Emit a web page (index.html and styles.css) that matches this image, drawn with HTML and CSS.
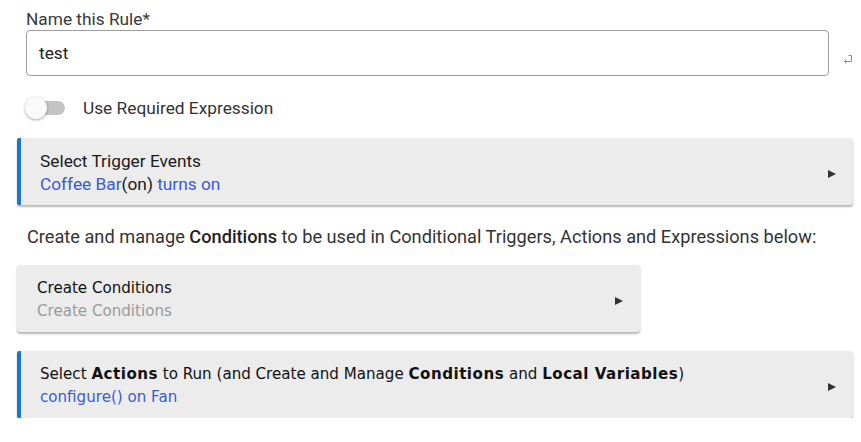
FILE: index.html
```html
<!DOCTYPE html>
<html>
<head>
<meta charset="utf-8">
<link rel="stylesheet" href="styles.css">
</head>
<body>
<div class="page">
  <div class="field">
    <label class="field-label">Name this Rule*</label>
    <div class="input-row">
      <div class="input">test</div>
      <svg class="enter-icon" width="11" height="11" viewBox="0 0 11 11">
        <path d="M6.5 1.5 H9.5 V7.5 H2.5 M4.5 5.5 L2.5 7.5 L4.5 9.5" fill="none" stroke="#8a8a8a" stroke-width="1"/>
      </svg>
    </div>
  </div>
  <div class="toggle-row">
    <span class="toggle"><span class="track"></span><span class="knob"></span></span>
    <span class="toggle-label">Use Required Expression</span>
  </div>
  <div class="card accent roboto first">
    <div class="card-text">
      <div class="card-title">Select Trigger Events</div>
      <div class="card-sub link">Coffee Bar<span class="plain">(on)</span> turns on</div>
    </div>
    <span class="arrow"></span>
  </div>
  <p class="note">Create and manage <b>Conditions</b> to be used in Conditional Triggers, Actions and Expressions below:</p>
  <div class="card narrow tahoma">
    <div class="card-text">
      <div class="card-title">Create Conditions</div>
      <div class="card-sub muted">Create Conditions</div>
    </div>
    <span class="arrow"></span>
  </div>
  <div class="card accent tahoma last">
    <div class="card-text">
      <div class="card-title">Select <b>Actions</b> to Run (and Create and Manage <b>Conditions</b> and <b>Local Variables</b>)</div>
      <div class="card-sub link">configure() on Fan</div>
    </div>
    <span class="arrow"></span>
  </div>
</div>
</body>
</html>
```
FILE: styles.css
```css
html, body {
  margin: 0;
  padding: 0;
  background: #ffffff;
}
.page {
  padding: 9px 8px 0 17px;
  font-family: Roboto, "Liberation Sans", sans-serif;
  color: #333333;
  font-size: 17.3px;
}
.field {
  padding-left: 9px;
}
.field-label {
  display: block;
  line-height: 21px;
  color: #3a3a3a;
}
.input-row {
  display: flex;
  align-items: center;
}
.input {
  width: 803px;
  box-sizing: border-box;
  height: 46px;
  border: 1px solid #9e9e9e;
  border-radius: 4px;
  padding: 0 12px;
  line-height: 45px;
  color: #222;
}
.enter-icon {
  margin-left: 13px;
  margin-top: 12px;
}
.toggle-row {
  display: flex;
  align-items: center;
  height: 24px;
  margin-top: 20px;
  padding-left: 8px;
}
.toggle {
  position: relative;
  width: 40px;
  height: 22px;
  display: inline-block;
}
.track {
  position: absolute;
  left: 10px;
  top: 4px;
  width: 30px;
  height: 14px;
  border-radius: 7px;
  background: #c4c4c4;
}
.knob {
  position: absolute;
  left: 0;
  top: 0;
  width: 22px;
  height: 22px;
  border-radius: 50%;
  background: #fafafa;
  box-shadow: 0 1px 3px rgba(0,0,0,0.35);
}
.toggle-label {
  margin-left: 18px;
  color: #333;
}
.card {
  display: flex;
  align-items: center;
  background: #ececec;
  border-radius: 3px;
  box-shadow: 0 2px 2px rgba(0,0,0,0.28), 0 0 1px rgba(0,0,0,0.08);
  height: 67px;
  box-sizing: border-box;
  padding: 0 17px 0 20px;
}
.card.accent {
  border-left: 4px solid #1c76d0;
  padding-left: 19px;
  border-radius: 2px 3px 3px 2px;
}
.card.first {
  margin-top: 18px;
}
.card.narrow {
  width: 623px;
}
.card.last {
  margin-top: 19px;
}
.card-text {
  flex: 1;
  padding-top: 2px;
}
.card-title {
  line-height: 23px;
  color: #1a1a1a;
}
.card-sub {
  line-height: 23px;
}
.roboto {
  font-family: Roboto, "Liberation Sans", sans-serif;
  font-size: 17.3px;
}
.tahoma {
  font-family: "DejaVu Sans", Verdana, sans-serif;
  font-size: 15.1px;
}
.tahoma .card-title {
  color: #111;
}
.tahoma b {
  font-weight: bold;
  letter-spacing: 0.5px;
}
.link {
  color: #3a5bd4;
}
.plain {
  color: #1a1a1a;
}
.muted {
  color: #9a9a9a;
}
.arrow {
  width: 0;
  height: 0;
  border-top: 4.5px solid transparent;
  border-bottom: 4.5px solid transparent;
  border-left: 8px solid #333;
  margin-top: 5px;
}
.note {
  margin: 0 0 18px 0;
  padding: 22px 0 0 10px;
  height: 20px;
  line-height: 20px;
  font-size: 18.2px;
  color: #333;
}
.note b {
  font-weight: 500;
  color: #222;
}
```
